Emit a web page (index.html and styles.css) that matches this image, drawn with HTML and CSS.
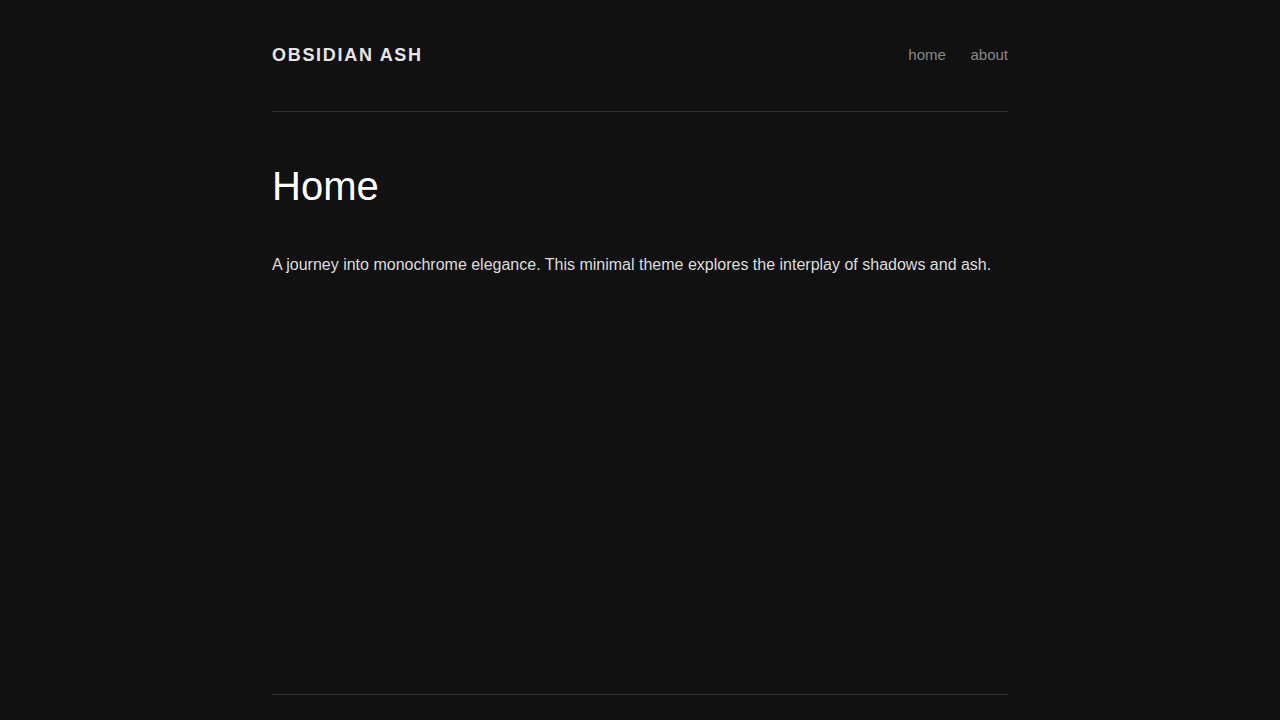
FILE: index.html
```html
<!DOCTYPE html>
<html lang="en">
<head>
<meta charset="utf-8">
<title>Obsidian Ash</title>
<link rel="stylesheet" href="styles.css">
</head>
<body>
<div class="wrap">
  <header class="site-header">
    <a class="site-title" href="#">Obsidian Ash</a>
    <nav class="site-nav">
      <a href="#">home</a>
      <a href="#">about</a>
    </nav>
  </header>
  <main class="content">
    <h1 class="page-title">Home</h1>
    <p class="intro">A journey into monochrome elegance. This minimal theme explores the interplay of shadows and ash.</p>
  </main>
  <footer class="site-footer"></footer>
</div>
</body>
</html>
```
FILE: styles.css
```css
html, body {
  margin: 0;
  padding: 0;
  background: #111111;
}
body {
  font-family: "Liberation Sans", Arial, sans-serif;
  color: #dddddd;
}
.wrap {
  width: 736px;
  margin: 0 auto;
}
.site-header {
  display: flex;
  justify-content: space-between;
  align-items: center;
  padding: 41px 0 42px;
  border-bottom: 1px solid #333333;
  line-height: 28px;
}
.site-title {
  font-size: 18px;
  font-weight: bold;
  text-transform: uppercase;
  letter-spacing: 1.7px;
  color: #e6e6e6;
  text-decoration: none;
}
.site-nav {
  display: flex;
  gap: 24.6px;
}
.site-nav a {
  font-size: 15px;
  color: #888888;
  text-decoration: none;
}
.content {
  height: 582px;
  box-sizing: border-box;
  padding-top: 50px;
}
.page-title {
  margin: 0;
  font-size: 40px;
  line-height: 48px;
  font-weight: normal;
  color: #ffffff;
}
.intro {
  margin: 42px 0 0;
  font-size: 16px;
  line-height: 25.6px;
  color: #dddddd;
}
.site-footer {
  border-top: 1px solid #333333;
  height: 60px;
}
```
